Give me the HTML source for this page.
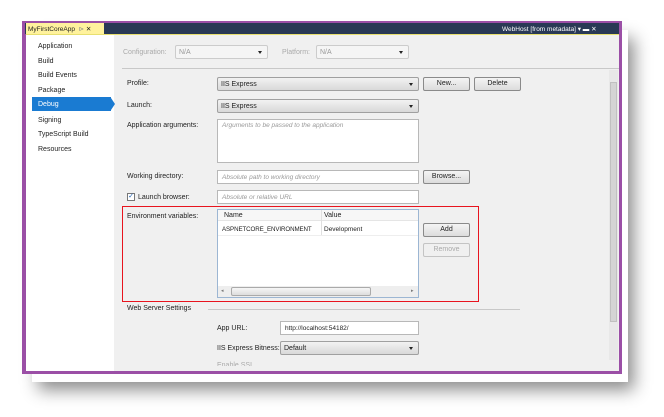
<!DOCTYPE html>
<html><head><style>
*{margin:0;padding:0;box-sizing:border-box}
body{width:664px;height:417px;background:#fff;position:relative;overflow:hidden;font-family:"Liberation Sans",sans-serif;font-size:7px;color:#1e1e1e}
.a{position:absolute}
.t{position:absolute;white-space:nowrap;font-size:7px;line-height:9px}
.dd{position:absolute;height:14px;border:1px solid #a0a0a0;border-radius:2px;background:linear-gradient(#f2f2f2,#d9d9d9);font-size:7px;line-height:13px;padding-left:3px}
.dd:after{content:"";position:absolute;right:5px;top:5px;border-left:2px solid transparent;border-right:2px solid transparent;border-top:3px solid #222}
.in{position:absolute;height:14px;border:1px solid #b8b8b8;background:#fff;font-size:6.5px;line-height:13px;padding-left:4px;color:#999;font-style:italic}
.bt{position:absolute;height:14px;border:1px solid #8a8a8a;border-radius:2px;background:linear-gradient(#f4f4f4,#dcdcdc);text-align:center;font-size:7px;line-height:12px}
</style></head><body>
<div class="a" style="left:32px;top:30px;width:596px;height:352px;box-shadow:6px 8px 16px rgba(0,0,0,0.45)"></div>
<div class="a" style="left:22px;top:21px;width:600px;height:353px;background:#9b4fa6"></div>
<div class="a" style="left:25px;top:23px;width:594px;height:11px;background:#293955"></div>
<div class="a" style="left:26px;top:23px;width:78px;height:12px;background:#fff29d"></div>
<div class="t" style="left:28px;top:25px;font-size:6.5px">MyFirstCoreApp &nbsp;<span style="color:#888">⊳</span> ✕</div>
<div class="t" style="left:502px;top:25px;color:#fff;font-size:6.5px">WebHost [from metadata] ▾ ▬ ✕</div>
<div class="a" style="left:26px;top:35px;width:593px;height:336px;background:#f0f0f0"></div>
<div class="a" style="left:26px;top:34px;width:593px;height:1px;background:#e8e070"></div>
<div class="a" style="left:26px;top:35px;width:88px;height:336px;background:#fff"></div>
<div class="t" style="left:38px;top:42px">Application</div>
<div class="t" style="left:38px;top:57px">Build</div>
<div class="t" style="left:38px;top:71px">Build Events</div>
<div class="t" style="left:38px;top:86px">Package</div>
<div class="a" style="left:32px;top:97px;width:79px;height:14px;background:#1a7bd2"></div>
<div class="a" style="left:111px;top:98px;border-top:6px solid transparent;border-bottom:6px solid transparent;border-left:4px solid #1a7bd2"></div>
<div class="t" style="left:38px;top:100px;color:#fff">Debug</div>
<div class="t" style="left:38px;top:116px">Signing</div>
<div class="t" style="left:38px;top:130px">TypeScript Build</div>
<div class="t" style="left:38px;top:145px">Resources</div>

<div class="t" style="left:123px;top:48px;color:#aaa">Configuration:</div>
<div class="dd" style="left:175px;top:45px;width:93px;background:#f5f5f5;border-color:#ccc;color:#999">N/A</div>
<div class="t" style="left:282px;top:48px;color:#aaa">Platform:</div>
<div class="dd" style="left:316px;top:45px;width:93px;background:#f5f5f5;border-color:#ccc;color:#999">N/A</div>
<div class="a" style="left:122px;top:68px;width:497px;height:1px;background:#c8c8c8"></div>

<div class="t" style="left:127px;top:79px">Profile:</div>
<div class="dd" style="left:217px;top:77px;width:202px">IIS Express</div>
<div class="bt" style="left:423px;top:77px;width:47px">New...</div>
<div class="bt" style="left:474px;top:77px;width:47px">Delete</div>
<div class="t" style="left:127px;top:101px">Launch:</div>
<div class="dd" style="left:217px;top:99px;width:202px">IIS Express</div>
<div class="t" style="left:127px;top:121px">Application arguments:</div>
<div class="in" style="left:217px;top:119px;width:202px;height:44px;line-height:9px;padding-top:1px">Arguments to be passed to the application</div>
<div class="t" style="left:127px;top:172px">Working directory:</div>
<div class="in" style="left:217px;top:170px;width:202px">Absolute path to working directory</div>
<div class="bt" style="left:423px;top:170px;width:47px">Browse...</div>
<div class="a" style="left:127px;top:193px;width:8px;height:8px;border:1px solid #777;background:#fff;font-size:7px;line-height:6px;text-align:center;color:#1a5fb4">✓</div>
<div class="t" style="left:138px;top:193px">Launch browser:</div>
<div class="in" style="left:217px;top:190px;width:202px">Absolute or relative URL</div>

<div class="a" style="left:122px;top:206px;width:357px;height:96px;border:1.5px solid #e8141e"></div>
<div class="t" style="left:127px;top:212px">Environment variables:</div>
<div class="a" style="left:217px;top:209px;width:202px;height:89px;border:1px solid #9cb6d3;background:#fff"></div>
<div class="a" style="left:218px;top:210px;width:200px;height:11px;background:#f7f7f7;border-bottom:1px solid #e5e5e5"></div>
<div class="a" style="left:321px;top:210px;width:1px;height:25px;background:#e0e0e0"></div>
<div class="t" style="left:224px;top:211px">Name</div>
<div class="t" style="left:324px;top:211px">Value</div>
<div class="a" style="left:218px;top:235px;width:200px;height:1px;background:#eee"></div>
<div class="t" style="left:222px;top:225px;font-size:6.2px;letter-spacing:-0.1px">ASPNETCORE_ENVIRONMENT</div>
<div class="t" style="left:324px;top:225px;font-size:6.5px">Development</div>
<div class="a" style="left:218px;top:286px;width:200px;height:11px;background:#eee"></div>
<div class="t" style="left:221px;top:287px;font-size:5px;color:#777">◂</div>
<div class="t" style="left:411px;top:287px;font-size:5px;color:#777">▸</div>
<div class="a" style="left:231px;top:287px;width:140px;height:9px;border:1px solid #aaa;border-radius:2px;background:linear-gradient(#f6f6f6,#ddd)"></div>
<div class="bt" style="left:423px;top:223px;width:47px">Add</div>
<div class="bt" style="left:423px;top:243px;width:47px;border-color:#c4c4c4;color:#aaa;background:#f0f0f0">Remove</div>

<div class="t" style="left:127px;top:304px">Web Server Settings</div>
<div class="a" style="left:208px;top:309px;width:312px;height:1px;background:#c8c8c8"></div>
<div class="t" style="left:217px;top:324px">App URL:</div>
<div class="in" style="left:280px;top:321px;width:139px;color:#1e1e1e;font-style:normal">http://localhost:54182/</div>
<div class="t" style="left:217px;top:344px">IIS Express Bitness:</div>
<div class="dd" style="left:280px;top:341px;width:139px">Default</div>
<div class="t" style="left:217px;top:361px;color:#aaa;height:5px;overflow:hidden">Enable SSL</div>

<div class="a" style="left:609px;top:70px;width:9px;height:290px;background:#e8e8e8"></div>
<div class="a" style="left:610px;top:82px;width:7px;height:240px;background:#d4d4d4;border:1px solid #c0c0c0"></div>
</body></html>
